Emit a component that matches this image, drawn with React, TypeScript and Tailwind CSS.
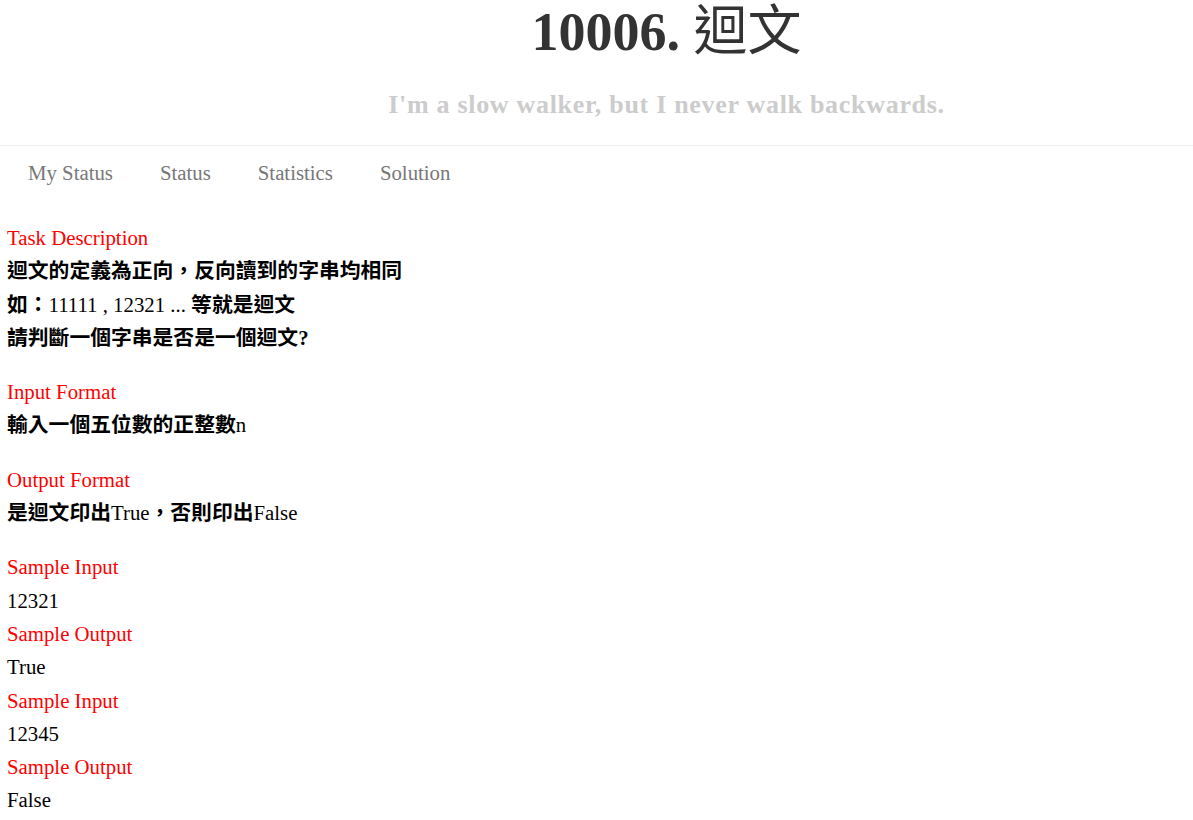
import React from "react";

const serif = "font-['Liberation_Serif','Noto_Sans_CJK_TC',serif]";

function Heading({ children, className = "" }: { children: React.ReactNode; className?: string }) {
    return <div className={`text-[#ff0000] ${className}`}>{children}</div>;
}

function B({ children }: { children: React.ReactNode }) {
    return <span className="font-bold">{children}</span>;
}

export default function App() {
    const tabs = ["My Status", "Status", "Statistics", "Solution"];

    return (
        <div className={`min-h-screen bg-white text-black ${serif}`}>
            <header className="h-[146px] border-b border-[#eeeeee] pl-[140px] flex flex-col items-center">
                <h1 className="text-[54px] leading-[64px] font-bold text-[#333333]">
                    10006. <span className="font-normal">迴文</span>
                </h1>
                <p className="mt-[25px] text-[26px] leading-[32px] tracking-[0.7px] font-bold text-[#cccccc]">
                    I'm a slow walker, but I never walk backwards.
                </p>
            </header>

            <nav className="flex gap-[47px] pl-[28px] text-[20.8px] leading-[54px] text-[#777777]">
                {tabs.map((t) => (
                    <a key={t} className="cursor-pointer hover:text-[#333333]">
                        {t}
                    </a>
                ))}
            </nav>

            <main className="pl-[7px] pt-[21px] text-[20.8px] leading-[33.3px]">
                <section>
                    <Heading>Task Description</Heading>
                    <div><B>迴文的定義為正向，反向讀到的字串均相同</B></div>
                    <div><B>如：</B>11111 , 12321 ... <B>等就是迴文</B></div>
                    <div><B>請判斷一個字串是否是一個迴文?</B></div>
                </section>

                <section className="mt-[21px]">
                    <Heading>Input Format</Heading>
                    <div><B>輸入一個五位數的正整數</B>n</div>
                </section>

                <section className="mt-[21px]">
                    <Heading>Output Format</Heading>
                    <div><B>是迴文印出</B>True<B>，否則印出</B>False</div>
                </section>

                <section className="mt-[21px]">
                    <Heading>Sample Input</Heading>
                    <div>12321</div>
                    <Heading>Sample Output</Heading>
                    <div>True</div>
                    <Heading>Sample Input</Heading>
                    <div>12345</div>
                    <Heading>Sample Output</Heading>
                    <div>False</div>
                </section>
            </main>
        </div>
    );
}
